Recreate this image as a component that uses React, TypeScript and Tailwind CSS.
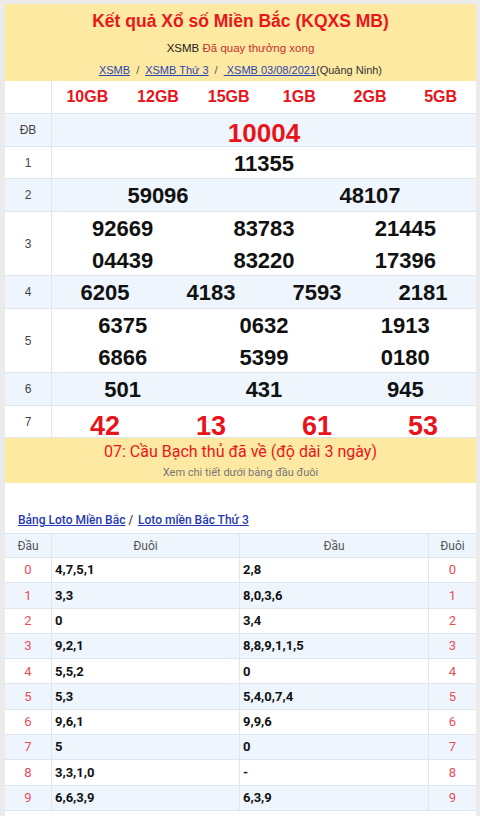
import React from "react";

const arial = { fontFamily: '"Liberation Sans", Arial, sans-serif' };

function Row({
  label,
  h,
  blue,
  children,
}: {
  label: string;
  h: string;
  blue?: boolean;
  children: React.ReactNode;
}) {
  return (
    <div className={`flex border-b border-[#dfe6ee] ${h} ${blue ? "bg-[#eef5fd]" : "bg-white"}`}>
      <div className="w-[47px] shrink-0 border-r border-[#dfe6ee] flex items-center justify-center text-[12px] text-[#444]">
        {label}
      </div>
      <div className="flex-1 min-w-0">{children}</div>
    </div>
  );
}

function Nums({ items, cls, lineH = "h-full" }: { items: string[]; cls: string; lineH?: string }) {
  const cols =
    items.length === 1
      ? "grid-cols-1"
      : items.length === 2
      ? "grid-cols-2"
      : items.length === 3
      ? "grid-cols-3"
      : items.length === 4
      ? "grid-cols-4"
      : "grid-cols-6";
  return (
    <div className={`grid ${cols} ${lineH}`}>
      {items.map((n, i) => (
        <div key={i} className={`flex items-center justify-center ${cls}`}>
          {n}
        </div>
      ))}
    </div>
  );
}

const loto: [string, string, string][] = [
  ["0", "4,7,5,1", "2,8"],
  ["1", "3,3", "8,0,3,6"],
  ["2", "0", "3,4"],
  ["3", "9,2,1", "8,8,9,1,1,5"],
  ["4", "5,5,2", "0"],
  ["5", "5,3", "5,4,0,7,4"],
  ["6", "9,6,1", "9,9,6"],
  ["7", "5", "0"],
  ["8", "3,3,1,0", "-"],
  ["9", "6,6,3,9", "6,3,9"],
];

export default function App() {
  const num = "text-[22px] font-bold text-[#111]";
  return (
    <div className="min-h-[816px] bg-[#ebebeb] pl-[5px] pr-[4px] pt-[4px]" style={arial}>
      <div className="bg-white min-h-[812px]">
        {/* Header */}
        <div className="bg-[#fde9a2] h-[77px] flex flex-col items-center">
          <div className="mt-[7px] text-[17.5px] leading-[21px] font-bold text-[#e8171c]">
            Kết quả Xổ số Miền Bắc (KQXS MB)
          </div>
          <div className="mt-[9px] text-[11.5px] leading-[14px] text-[#222]">
            XSMB <span className="text-[#c9302c]">Đã quay thưởng xong</span>
          </div>
          <div className="mt-[9px] text-[11px] leading-[13px] text-[#333]">
            <span className="underline text-[#2b46b3]">XSMB</span>
            <span className="mx-[6px] text-[#555]">/</span>
            <span className="underline text-[#2b46b3]">XSMB Thứ 3</span>
            <span className="mx-[6px] text-[#555]">/</span>
            <span className="underline text-[#2b46b3]">&nbsp;XSMB 03/08/2021</span>
            <span>(Quảng Ninh)</span>
          </div>
        </div>

        {/* Prize table */}
        <Row label="" h="h-[33px]">
          <Nums
            items={["10GB", "12GB", "15GB", "1GB", "2GB", "5GB"]}
            cls="text-[16px] font-bold text-[#e8141b]"
          />
        </Row>
        <Row label="ĐB" h="h-[33px]" blue>
          <Nums items={["10004"]} cls="text-[26px] font-bold text-[#e8141b]" />
        </Row>
        <Row label="1" h="h-[32px]">
          <Nums items={["11355"]} cls={num} />
        </Row>
        <Row label="2" h="h-[33px]" blue>
          <Nums items={["59096", "48107"]} cls={num} />
        </Row>
        <Row label="3" h="h-[64px]">
          <Nums items={["92669", "83783", "21445"]} cls={num} lineH="h-[32px]" />
          <Nums items={["04439", "83220", "17396"]} cls={num} lineH="h-[31px]" />
        </Row>
        <Row label="4" h="h-[33px]" blue>
          <Nums items={["6205", "4183", "7593", "2181"]} cls={num} />
        </Row>
        <Row label="5" h="h-[64px]">
          <Nums items={["6375", "0632", "1913"]} cls={num} lineH="h-[32px]" />
          <Nums items={["6866", "5399", "0180"]} cls={num} lineH="h-[31px]" />
        </Row>
        <Row label="6" h="h-[33px]" blue>
          <Nums items={["501", "431", "945"]} cls={num} />
        </Row>
        <Row label="7" h="h-[32px]">
          <Nums items={["42", "13", "61", "53"]} cls="text-[27px] font-bold text-[#e8141b]" />
        </Row>

        {/* Notice */}
        <div
          className="bg-[#fde9a2] h-[45px] flex flex-col items-center"
          style={{ fontFamily: 'Roboto, "Liberation Sans", sans-serif' }}
        >
          <div className="mt-[4px] text-[16px] leading-[20px] text-[#e8171c]">
            07: Cầu Bạch thủ đã về (độ dài 3 ngày)
          </div>
          <div className="mt-[4px] text-[11px] leading-[13px] text-[#777]">
            Xem chi tiết dưới bảng đầu đuôi
          </div>
        </div>

        {/* Loto */}
        <div style={{ fontFamily: 'Roboto, "Liberation Sans", sans-serif' }}>
          <div className="pt-[29px] pl-[13px] h-[50px] text-[12px] leading-[16px] font-medium">
            <span className="underline text-[#2639b0]">Bảng Loto Miền Bắc</span>
            <span className="text-[#444]"> / </span>
            <span className="underline text-[#2639b0] ml-[2px]">Loto miền Bắc Thứ 3</span>
          </div>
          <div className="border-t border-[#dfe6ee]">
            <div className="grid grid-cols-[47px_188px_189px_1fr] h-[24px] bg-[#eef5fd] border-b border-[#dfe6ee] text-[12px] text-[#555]">
              <div className="flex items-center justify-center border-r border-[#dfe6ee]">Đầu</div>
              <div className="flex items-center justify-center border-r border-[#dfe6ee]">Đuôi</div>
              <div className="flex items-center justify-center border-r border-[#dfe6ee]">Đầu</div>
              <div className="flex items-center justify-center">Đuôi</div>
            </div>
            {loto.map(([d, a, b], i) => (
              <div
                key={d}
                className={`grid grid-cols-[47px_188px_189px_1fr] h-[25.3px] border-b border-[#dfe6ee] ${
                  i % 2 === 1 ? "bg-[#eef5fd]" : "bg-white"
                }`}
              >
                <div className="flex items-center justify-center border-r border-[#dfe6ee] text-[13px] text-[#ea4c5a]">
                  {d}
                </div>
                <div className="flex items-center pl-[3px] border-r border-[#dfe6ee] text-[13px] font-bold text-[#111]">
                  {a}
                </div>
                <div className="flex items-center pl-[3px] border-r border-[#dfe6ee] text-[13px] font-bold text-[#111]">
                  {b}
                </div>
                <div className="flex items-center justify-center text-[13px] text-[#ea4c5a]">{d}</div>
              </div>
            ))}
          </div>
        </div>
      </div>
    </div>
  );
}
